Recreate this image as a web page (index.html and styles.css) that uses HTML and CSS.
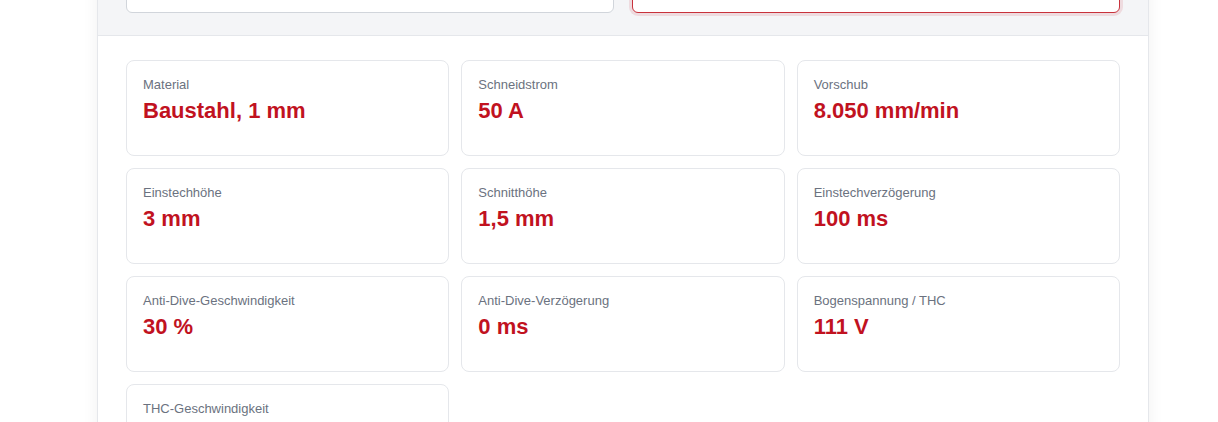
FILE: index.html
```html
<!DOCTYPE html>
<html lang="de">
<head>
  <meta charset="UTF-8" />
  <meta name="viewport" content="width=device-width, initial-scale=1.0"/>
  <title>Schneidparameter</title>
  <link rel="stylesheet" href="styles.css">
</head>
<body>
  <div class="panel">
    <div class="panel-head">
      <input class="field" type="text" aria-label="Material">
      <input class="field field-active" type="text" aria-label="Dicke">
    </div>

    <div class="panel-body">
      <div class="params">
        <div class="param"><span class="label">Material</span><span class="value">Baustahl, 1 mm</span></div>
        <div class="param"><span class="label">Schneidstrom</span><span class="value">50 A</span></div>
        <div class="param"><span class="label">Vorschub</span><span class="value">8.050 mm/min</span></div>
        <div class="param"><span class="label">Einstechhöhe</span><span class="value">3 mm</span></div>
        <div class="param"><span class="label">Schnitthöhe</span><span class="value">1,5 mm</span></div>
        <div class="param"><span class="label">Einstechverzögerung</span><span class="value">100 ms</span></div>
        <div class="param"><span class="label">Anti-Dive-Geschwindigkeit</span><span class="value">30 %</span></div>
        <div class="param"><span class="label">Anti-Dive-Verzögerung</span><span class="value">0 ms</span></div>
        <div class="param"><span class="label">Bogenspannung / THC</span><span class="value">111 V</span></div>
        <div class="param"><span class="label">THC-Geschwindigkeit</span><span class="value">50 %</span></div>
      </div>
    </div>
  </div>
</body>
</html>
```

FILE: styles.css
```css
body {
  font-family: 'Liberation Sans', Arial, sans-serif;
  background: #fff;
  margin: 0;
  padding: 0 69px 0 97px;
  color: #1f2937;
  overflow: hidden;
}
.panel {
  background: white;
  border-left: 1px solid #e5e7eb;
  border-right: 1px solid #e5e7eb;
  box-shadow: 0 0 16px rgba(0,0,0,0.06);
  margin-top: -40px;
}
.panel-head {
  background: #f4f5f7;
  border-bottom: 1px solid #e5e7eb;
  padding: 0 28px 22px;
  display: grid;
  grid-template-columns: 1fr 1fr;
  gap: 18px;
}
.field {
  height: 53px;
  box-sizing: border-box;
  border: 1px solid #d1d5db;
  border-radius: 6px;
  background: #fff;
  font: inherit;
}
.field-active {
  border-color: #c8323c;
  box-shadow: 0 0 0 3px rgba(200,50,60,0.13);
}
.panel-body {
  padding: 24px 28px;
}
.params {
  display: grid;
  grid-template-columns: repeat(3, 1fr);
  gap: 12px;
}
.param {
  border: 1px solid #e5e7eb;
  border-radius: 8px;
  padding: 15px 16px;
  height: 96px;
  box-sizing: border-box;
  display: flex;
  flex-direction: column;
}
.label {
  font-size: 13px;
  line-height: 18px;
  color: #6b7280;
}
.value {
  font-size: 22px;
  font-weight: bold;
  line-height: 28px;
  margin-top: 3px;
  color: #c1121f;
}
```
